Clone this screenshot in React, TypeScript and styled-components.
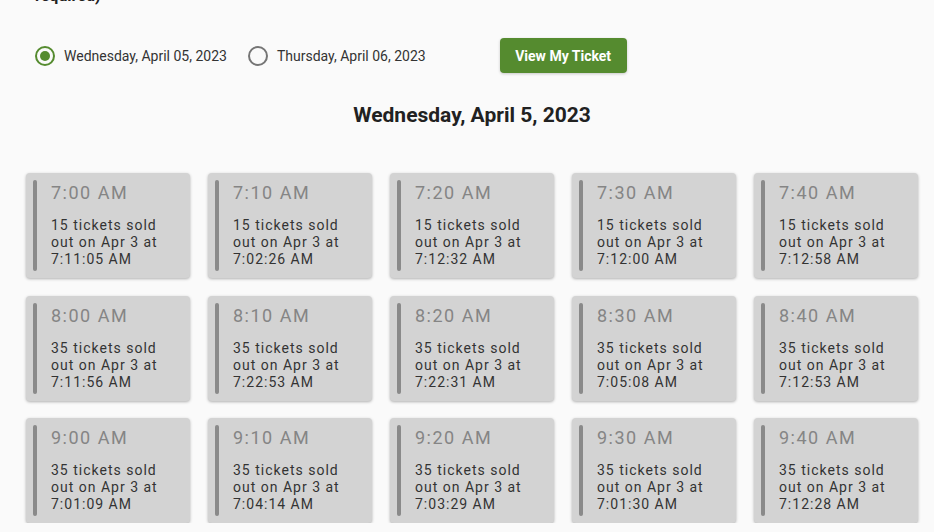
import styled, { createGlobalStyle } from "styled-components";

const GlobalStyle = createGlobalStyle`
  html, body {
    margin: 0;
    padding: 0;
    background: #fafafa;
    font-family: Roboto, "Liberation Sans", sans-serif;
    overflow: hidden;
  }
`;

type Slot = { time: string; sold: number; at: string };

const slots: Slot[] = [
  { time: "7:00 AM", sold: 15, at: "7:11:05 AM" },
  { time: "7:10 AM", sold: 15, at: "7:02:26 AM" },
  { time: "7:20 AM", sold: 15, at: "7:12:32 AM" },
  { time: "7:30 AM", sold: 15, at: "7:12:00 AM" },
  { time: "7:40 AM", sold: 15, at: "7:12:58 AM" },
  { time: "8:00 AM", sold: 35, at: "7:11:56 AM" },
  { time: "8:10 AM", sold: 35, at: "7:22:53 AM" },
  { time: "8:20 AM", sold: 35, at: "7:22:31 AM" },
  { time: "8:30 AM", sold: 35, at: "7:05:08 AM" },
  { time: "8:40 AM", sold: 35, at: "7:12:53 AM" },
  { time: "9:00 AM", sold: 35, at: "7:01:09 AM" },
  { time: "9:10 AM", sold: 35, at: "7:04:14 AM" },
  { time: "9:20 AM", sold: 35, at: "7:03:29 AM" },
  { time: "9:30 AM", sold: 35, at: "7:01:30 AM" },
  { time: "9:40 AM", sold: 35, at: "7:12:28 AM" },
];

export default function App() {
  return (
    <>
      <GlobalStyle />
      <Page>
        <TopNote>required)</TopNote>
        <Toolbar>
          <RadioGroup>
            <RadioOption>
              <RadioCircle $checked />
              <RadioLabel>Wednesday, April 05, 2023</RadioLabel>
            </RadioOption>
            <RadioOption>
              <RadioCircle />
              <RadioLabel>Thursday, April 06, 2023</RadioLabel>
            </RadioOption>
          </RadioGroup>
          <TicketButton>View My Ticket</TicketButton>
        </Toolbar>
        <DayTitle>Wednesday, April 5, 2023</DayTitle>
        <SlotGrid>
          {slots.map((s) => (
            <SlotCard key={s.time}>
              <SlotBar />
              <SlotBody>
                <SlotTime>{s.time}</SlotTime>
                <SlotInfo>
                  {s.sold} tickets sold out on Apr 3 at {s.at}
                </SlotInfo>
              </SlotBody>
            </SlotCard>
          ))}
        </SlotGrid>
      </Page>
    </>
  );
}

const Page = styled.div`
  padding: 0 16px 0 26px;
`;

const TopNote = styled.div`
  margin-top: -14px;
  padding-left: 9px;
  font-size: 16px;
  line-height: 19px;
  font-weight: 700;
  color: #212121;
`;

const Toolbar = styled.div`
  display: flex;
  align-items: center;
  margin-top: 33px;
  padding-left: 9px;
  height: 35px;
`;

const RadioGroup = styled.div`
  display: flex;
  align-items: center;
  gap: 21px;
`;

const RadioOption = styled.label`
  display: flex;
  align-items: center;
  gap: 9px;
  cursor: pointer;
`;

const RadioCircle = styled.span<{ $checked?: boolean }>`
  box-sizing: border-box;
  width: 20px;
  height: 20px;
  border-radius: 50%;
  border: 2px solid ${(p) => (p.$checked ? "#558b2f" : "#757575")};
  display: flex;
  align-items: center;
  justify-content: center;
  &::after {
    content: "";
    width: 10px;
    height: 10px;
    border-radius: 50%;
    background: ${(p) => (p.$checked ? "#558b2f" : "transparent")};
  }
`;

const RadioLabel = styled.span`
  font-size: 14px;
  color: #333;
`;

const TicketButton = styled.button`
  margin-left: 74px;
  width: 127px;
  height: 35px;
  border: none;
  border-radius: 4px;
  background: #558b2f;
  color: #fff;
  font-family: Roboto, "Liberation Sans", sans-serif;
  font-weight: 700;
  font-size: 14px;
  box-shadow: 0 1px 3px rgba(0, 0, 0, 0.2);
  cursor: pointer;
`;

const DayTitle = styled.h2`
  margin: 30px 0 0;
  text-align: center;
  font-size: 21px;
  line-height: 24px;
  font-weight: 700;
  color: #212121;
`;

const SlotGrid = styled.div`
  display: grid;
  grid-template-columns: repeat(5, 164px);
  column-gap: 18px;
  row-gap: 17.5px;
  margin-top: 46px;
`;

const SlotCard = styled.div`
  box-sizing: border-box;
  height: 105px;
  padding: 7px 12px 7px 7px;
  display: flex;
  gap: 14px;
  background: #d3d3d3;
  border-radius: 4px;
  box-shadow: 0 1px 3px rgba(0, 0, 0, 0.3);
`;

const SlotBar = styled.div`
  width: 4px;
  flex-shrink: 0;
  border-radius: 2px;
  background: #8a8a8a;
`;

const SlotBody = styled.div`
  display: flex;
  flex-direction: column;
`;

const SlotTime = styled.div`
  margin-top: 2px;
  font-size: 18px;
  line-height: 22px;
  letter-spacing: 1.5px;
  color: #858585;
`;

const SlotInfo = styled.div`
  margin-top: 13px;
  font-size: 14px;
  line-height: 17px;
  letter-spacing: 1px;
  color: #333;
`;
